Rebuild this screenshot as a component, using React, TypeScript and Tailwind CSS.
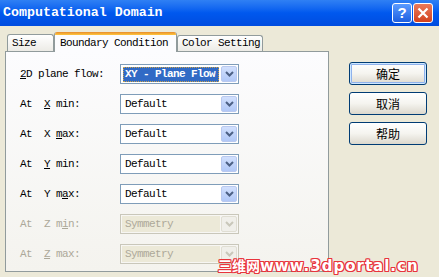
import React from 'react';

const mono = { fontFamily: '"Liberation Mono", "DejaVu Sans Mono", monospace' };

function Chevron({ color }: { color: string }) {
  return (
    <svg width="9" height="6" viewBox="0 0 9 6">
      <path d="M1 1 L4.5 4.5 L8 1" fill="none" stroke={color} strokeWidth="2" />
    </svg>
  );
}

interface SelectProps {
  value: string;
  focused?: boolean;
  disabled?: boolean;
}

function Select({ value, focused, disabled }: SelectProps) {
  if (disabled) {
    return (
      <div className="flex h-[20px] w-[119px] items-center border border-[#C9C7BA] bg-[#F7F6F3] p-px">
        <div className="flex h-full flex-1 items-center bg-[#ECE9D8] pl-[3px] text-[11px] tracking-[-0.6px] text-[#ACA899]">
          {value}
        </div>
        <div className="ml-px flex h-[16px] w-[16px] items-center justify-center rounded-[2px] border border-[#E0DED3] bg-[#F0EFEA]">
          <Chevron color="#C9C7BA" />
        </div>
      </div>
    );
  }
  return (
    <div className="flex h-[20px] w-[119px] items-center border border-[#7F9DB9] bg-white p-px">
      <div className="flex h-full flex-1 items-center pl-px">
        {focused ? (
          <div className="flex h-[15px] w-[96px] items-center border border-dotted border-[#C9A14A] bg-[#316AC5] pl-px text-[11px] font-bold tracking-[-0.6px] text-white">
            {value}
          </div>
        ) : (
          <div className="pl-[2px] text-[11px] tracking-[-0.6px] text-black">{value}</div>
        )}
      </div>
      <div className="flex h-[16px] w-[16px] items-center justify-center rounded-[2px] border border-[#B9C9EF] bg-linear-to-b from-[#D2E0FD] to-[#B1C8F7]">
        <Chevron color="#4D6185" />
      </div>
    </div>
  );
}

interface RowProps {
  label: React.ReactNode;
  value: string;
  focused?: boolean;
  disabled?: boolean;
}

function Row({ label, value, focused, disabled }: RowProps) {
  return (
    <div className="flex h-[20px] items-center">
      <div
        className={`w-[100px] whitespace-pre text-[11px] tracking-[-0.6px] ${disabled ? 'text-[#ACA899]' : 'text-black'}`}
      >
        {label}
      </div>
      <Select value={value} focused={focused} disabled={disabled} />
    </div>
  );
}

function XpButton({ children, primary }: { children: React.ReactNode; primary?: boolean }) {
  return (
    <button
      className={`flex h-[23px] w-[78px] items-center justify-center rounded-[3px] border border-[#003C74] bg-linear-to-b from-white via-[#F5F4EF] to-[#DCD8CD] text-[12px] text-black ${
        primary ? 'shadow-[inset_0_0_0_1px_#CEE7FF,inset_0_0_0_2px_#8FB2EC]' : ''
      }`}
      style={{ fontFamily: '"Noto Sans CJK SC", sans-serif' }}
    >
      {children}
    </button>
  );
}

export default function App() {
  return (
    <div className="relative h-[277px] w-[439px] overflow-hidden bg-[#ECE9D8]" style={mono}>
      {/* title bar */}
      <div className="flex h-[26px] items-center justify-between bg-linear-to-b from-[#2F80F4] via-[#0058EE] to-[#004CDF] pl-[3px] pr-[6px]">
        <span className="text-[13.3px] font-bold text-white">Computational Domain</span>
        <div className="flex gap-px">
          <div className="flex h-[20px] w-[20px] items-center justify-center rounded-[3px] border border-white bg-linear-to-b from-[#5A9BFF] to-[#1E5FE0] font-['Liberation_Sans'] text-[15px] font-bold text-white">
            ?
          </div>
          <div className="flex h-[20px] w-[20px] items-center justify-center rounded-[3px] border border-white bg-linear-to-b from-[#E9795A] to-[#D2401C]">
            <svg width="12" height="12" viewBox="0 0 12 12">
              <path d="M1.5 1.5 L10.5 10.5 M10.5 1.5 L1.5 10.5" stroke="white" strokeWidth="2.2" />
            </svg>
          </div>
        </div>
      </div>

      <div className="flex px-[5px]">
        {/* tabs + panel */}
        <div className="w-[324px]">
          <div className="relative z-10 flex h-[25px] items-end text-[11px] tracking-[-0.6px] text-black">
            <div className="ml-[2px] flex h-[17px] w-[47px] items-center rounded-t-[3px] border border-b-0 border-[#919B9C] bg-linear-to-b from-white to-[#ECEBE6] pl-[4px]">
              Size
            </div>
            <div className="-mb-px flex h-[20px] w-[123px] flex-col overflow-hidden rounded-t-[3px] border-x border-[#919B9C] bg-[#FCFCFE]">
              <div className="h-[3px] bg-linear-to-b from-[#E68B2C] to-[#FFC73C]" />
              <div className="flex flex-1 items-center pl-[5px]">Boundary Condition</div>
            </div>
            <div className="flex h-[16px] w-[86px] items-center rounded-t-[3px] border border-b-0 border-[#919B9C] bg-linear-to-b from-white to-[#ECEBE6] pl-[4px]">
              Color Setting
            </div>
          </div>
          <div className="flex h-[221px] flex-col gap-[10px] border border-[#919B9C] bg-linear-to-b from-[#FCFCFE] to-[#F4F3EE] pl-[14px] pt-[12px]">
            <Row
              label={
                <>
                  <span className="underline">2</span>D plane flow:
                </>
              }
              value="XY - Plane Flow"
              focused
            />
            <Row
              label={
                <>
                  At  <span className="underline">X</span> min:
                </>
              }
              value="Default"
            />
            <Row
              label={
                <>
                  At  X <span className="underline">m</span>ax:
                </>
              }
              value="Default"
            />
            <Row
              label={
                <>
                  At  <span className="underline">Y</span> min:
                </>
              }
              value="Default"
            />
            <Row
              label={
                <>
                  At  Y m<span className="underline">a</span>x:
                </>
              }
              value="Default"
            />
            <Row
              label={
                <>
                  At  Z m<span className="underline">i</span>n:
                </>
              }
              value="Symmetry"
              disabled
            />
            <Row
              label={
                <>
                  At  <span className="underline">Z</span> max:
                </>
              }
              value="Symmetry"
              disabled
            />
          </div>
        </div>

        {/* buttons */}
        <div className="ml-[20px] mt-[36px] flex flex-col gap-[7px]">
          <XpButton primary>确定</XpButton>
          <XpButton>取消</XpButton>
          <XpButton>帮助</XpButton>
        </div>
      </div>

      {/* watermark */}
      <div
        className="absolute left-[218px] top-[255px] z-20 flex items-baseline font-bold text-white [text-shadow:1px_0_#E8343C,-1px_0_#E8343C,0_1px_#E8343C,0_-1px_#E8343C,1px_1px_#E8343C,-1px_-1px_#E8343C,1px_-1px_#E8343C,-1px_1px_#E8343C]"
        style={{ fontFamily: '"DejaVu Sans", "Noto Sans CJK SC", sans-serif' }}
      >
        <span className="text-[14px]" style={{ fontFamily: '"Noto Sans CJK SC", sans-serif' }}>
          三维网
        </span>
        <span className="text-[15px] tracking-[1px]">www.3dportal.cn</span>
      </div>
    </div>
  );
}
